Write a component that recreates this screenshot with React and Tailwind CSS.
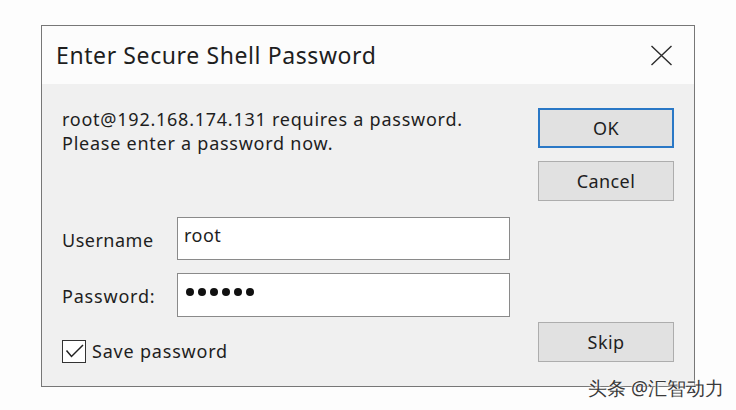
import React from "react";

const font = { fontFamily: '"Noto Sans", "Open Sans", sans-serif' };

function Button({ label, primary, className = "" }) {
  return (
    <div
      className={
        "flex h-[40px] w-[136px] items-center justify-center bg-[#e1e1e1] text-[18px] tracking-[0.4px] text-[#1e1e1e] " +
        (primary ? "border-2 border-[#2a78c6]" : "border border-[#adadad]") +
        " " + className
      }
    >
      {label}
    </div>
  );
}

export default function App() {
  return (
    <div
      className="relative h-[410px] w-[736px] bg-[#fdfdfd] pl-[41px] pt-[25px] font-['Noto_Sans','Open_Sans',sans-serif]"
    >
      <div className="flex h-[362px] w-[654px] flex-col border border-[#777777]">
        {/* title bar */}
        <div className="flex h-[58px] items-center justify-between bg-[#fcfcfc] pl-[14px] pr-[21px]">
          <span className="text-[23px] tracking-[0.6px] text-[#1e1e1e]">Enter Secure Shell Password</span>
          <svg width="23" height="21" viewBox="0 0 23 21">
            <path d="M1.5 1L21.5 20M21.5 1L1.5 20" stroke="#2b2b2b" strokeWidth="1.4" fill="none" />
          </svg>
        </div>

        {/* body */}
        <div className="flex flex-1 bg-[#f0f0f0]">
          <div className="flex w-[496px] flex-col pl-[20px] pt-[23px]">
            <div className="text-[18px] leading-[24px] tracking-[0.75px] text-[#1e1e1e]">
              <div>root@192.168.174.131 requires a password.</div>
              <div>Please enter a password now.</div>
            </div>

            <div className="mt-[62px] grid grid-cols-[115px_333px] gap-y-[13px] text-[18px] tracking-[0.5px] text-[#1e1e1e]">
              <div className="flex items-center pt-[3px]">Username</div>
              <div className="flex h-[43px] items-start border border-[#8a8a8a] bg-white pl-[6px] pt-[4px]">
                root
              </div>
              <div className="flex items-center pt-[2px] tracking-[0.8px]">Password:</div>
              <div className="flex h-[44px] items-center gap-[4px] border border-[#8a8a8a] bg-white pl-[8px] pb-[7px]">
                <span className="h-[8px] w-[8px] rounded-full bg-[#111]" />
                <span className="h-[8px] w-[8px] rounded-full bg-[#111]" />
                <span className="h-[8px] w-[8px] rounded-full bg-[#111]" />
                <span className="h-[8px] w-[8px] rounded-full bg-[#111]" />
                <span className="h-[8px] w-[8px] rounded-full bg-[#111]" />
                <span className="h-[8px] w-[8px] rounded-full bg-[#111]" />
              </div>
            </div>

            <div className="mt-[21px] flex items-center">
              <div className="h-[23px] w-[24px] border border-[#333] bg-white">
                <svg width="22" height="21" viewBox="0 0 22 21">
                  <path d="M3.5 9.5L8.5 15.5L20 4" stroke="#222" strokeWidth="1.5" fill="none" />
                </svg>
              </div>
              <span className="ml-[6px] text-[18px] tracking-[0.8px] text-[#1e1e1e]">Save password</span>
            </div>
          </div>

          <div className="flex flex-col pb-[24px] pt-[24px]">
            <Button label="OK" primary />
            <Button label="Cancel" className="mt-[13px]" />
            <Button label="Skip" className="mt-auto" />
          </div>
        </div>
      </div>

      <span
        className="absolute left-[588px] top-[374px] text-[19px] text-[#3a3a3a] [text-shadow:0_0_2px_#fff,0_0_2px_#fff]"
        style={font}
      >
        头条 @汇智动力
      </span>
    </div>
  );
}
